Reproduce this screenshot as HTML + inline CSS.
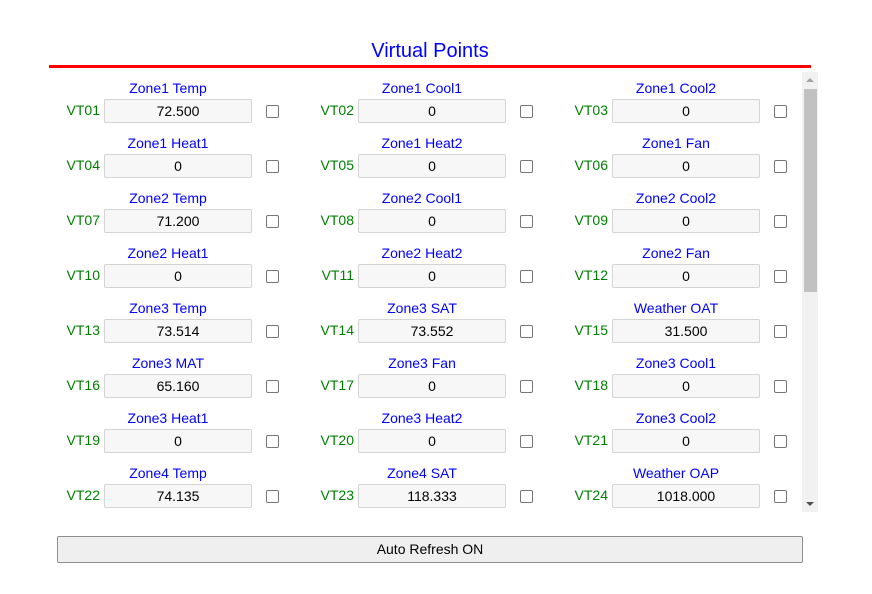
<!DOCTYPE html>
<html><head><style>
body{margin:0;width:872px;height:594px;background:#fff;font-family:"Liberation Sans",Arial,sans-serif;position:relative;overflow:hidden}
.t{position:absolute;left:0;width:860px;text-align:center;top:40px;font-size:20px;color:#0000ff}
.line{position:absolute;left:49px;top:65px;width:762px;height:3px;background:#f00}
.sb{position:absolute;left:802px;top:72px;width:16px;height:440px;background:#f1f1f1}
.th{position:absolute;left:2px;top:17px;width:13px;height:203px;background:#c1c1c1}
.au{position:absolute;left:4px;top:6px;width:0;height:0;border-left:4px solid transparent;border-right:4px solid transparent;border-bottom:4px solid #a3a3a3}
.ad{position:absolute;left:4px;bottom:6px;width:0;height:0;border-left:4px solid transparent;border-right:4px solid transparent;border-top:4px solid #505050}
.n{position:absolute;width:148px;text-align:center;font-size:14px;color:#0000ff}
.l{position:absolute;width:60px;text-align:right;font-size:14px;color:#008000}
.i{position:absolute;width:146px;height:22px;border:1px solid #d4d4d4;border-radius:2px;background:#f7f7f7;font-size:14px;text-align:center;line-height:22px;color:#000}
.c{position:absolute;width:11px;height:11px;border:1px solid #767676;border-radius:2px;background:#fff}
.btn{position:absolute;left:57px;top:536px;width:744px;height:25px;border:1px solid #8f8f8f;border-radius:2px;background:#efefef;font-size:14px;text-align:center;line-height:25px;color:#000}
</style></head><body>
<div class="t">Virtual Points</div>
<div class="line"></div>
<div class="sb"><div class="au"></div><div class="th"></div><div class="ad"></div></div>
<div id="g"></div>
<div class="btn">Auto Refresh ON</div>
<script>
var d=[["Zone1 Temp","72.500"],["Zone1 Cool1","0"],["Zone1 Cool2","0"],["Zone1 Heat1","0"],["Zone1 Heat2","0"],["Zone1 Fan","0"],["Zone2 Temp","71.200"],["Zone2 Cool1","0"],["Zone2 Cool2","0"],["Zone2 Heat1","0"],["Zone2 Heat2","0"],["Zone2 Fan","0"],["Zone3 Temp","73.514"],["Zone3 SAT","73.552"],["Weather OAT","31.500"],["Zone3 MAT","65.160"],["Zone3 Fan","0"],["Zone3 Cool1","0"],["Zone3 Heat1","0"],["Zone3 Heat2","0"],["Zone3 Cool2","0"],["Zone4 Temp","74.135"],["Zone4 SAT","118.333"],["Weather OAP","1018.000"]];
var h="";
d.forEach(function(e,k){var r=Math.floor(k/3),c=k%3,x=104+c*254,y=99+r*55;var id="VT"+(k+1<10?"0":"")+(k+1);
h+='<div class="n" style="left:'+(x-10)+'px;top:'+(y-19)+'px">'+e[0]+'</div>';
h+='<div class="l" style="left:'+(x-64)+'px;top:'+(y+3)+'px">'+id+'</div>';
h+='<div class="i" style="left:'+x+'px;top:'+y+'px">'+e[1]+'</div>';
h+='<div class="c" style="left:'+(x+162)+'px;top:'+(y+6)+'px"></div>';});
document.getElementById("g").innerHTML=h;
</script>
</body></html>
